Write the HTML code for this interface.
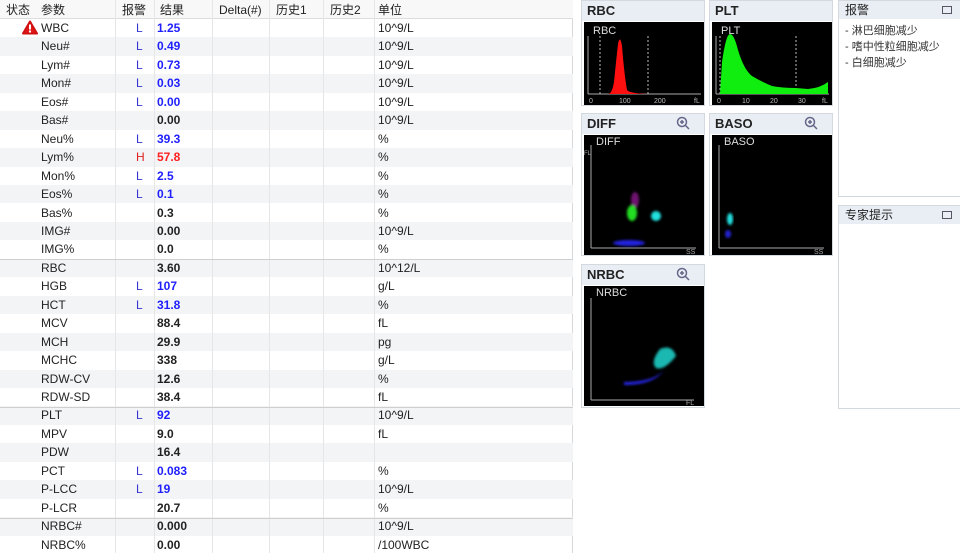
<!DOCTYPE html>
<html><head><meta charset="utf-8"><style>
*{margin:0;padding:0;box-sizing:border-box}
body{width:960px;height:553px;overflow:hidden;background:#fff;font-family:"Liberation Sans","Noto Sans CJK SC",sans-serif;font-size:12px;color:#222;position:relative}
.tbl{position:absolute;left:0;top:0;width:573px;height:553px;border-right:1px solid #d8d8d8}
.hdr{position:absolute;left:0;top:0;width:573px;height:19px;background:#f8f8f8;border-bottom:1px solid #ddd}
.r{position:absolute;left:0;width:573px;height:18.45px}
.r.alt{background:#f3f4f6}
.c{position:absolute;top:0;line-height:18px;white-space:nowrap}
.vl{position:absolute;top:0;width:1px;height:553px;background:#e6e6e6}
.sep{position:absolute;left:0;width:573px;height:1px;background:#cfcfcf}
.b{font-weight:bold}
.blue{color:#1f1fff}.red{color:#ff2020}
.fl{color:#3535d0}.fh{color:#e02020}
.pan{position:absolute;border:1px solid #d4d9e0;background:#fff}
.ph{height:20px;background:#e9eef5;font-weight:bold;font-size:13px;padding-left:5px;line-height:20px;color:#222}
.zi{position:absolute;right:14px;top:2px}
.ch{position:absolute;left:2px;top:21px;background:#000}
.rp{position:absolute;border:1px solid #d4d9e0;background:#fff}
.rph{height:18px;background:#e9eef5;font-size:12px;padding-left:6px;line-height:18px}
.bx{position:absolute;right:9px;top:5px;width:10px;height:8px;border:1px solid #556}
</style></head><body>
<div class="tbl">
<div class="hdr"></div>
<div class="c" style="left:6px;top:1px">状态</div>
<div class="c" style="left:41px;top:1px">参数</div>
<div class="c" style="left:122px;top:1px">报警</div>
<div class="c" style="left:160px;top:1px">结果</div>
<div class="c" style="left:219px;top:1px">Delta(#)</div>
<div class="c" style="left:276px;top:1px">历史1</div>
<div class="c" style="left:330px;top:1px">历史2</div>
<div class="c" style="left:378px;top:1px">单位</div>
<div id="rows"></div>
<div class="vl" style="left:115px"></div>
<div class="vl" style="left:154px"></div>
<div class="vl" style="left:212px"></div>
<div class="vl" style="left:269px"></div>
<div class="vl" style="left:323px"></div>
<div class="vl" style="left:374px"></div>
<div class="sep" style="top:259px"></div>
<div class="sep" style="top:407px"></div>
<div class="sep" style="top:518px"></div>
<svg style="position:absolute;left:22px;top:20px" width="16" height="15" viewBox="0 0 16 15"><path d="M8 1.5 L15 13.5 L1 13.5 Z" fill="#e01818" stroke="#d01010" stroke-linejoin="round" stroke-width="2"/><rect x="7" y="4.5" width="2" height="5" fill="#fff"/><rect x="7" y="10.5" width="2" height="2" fill="#fff"/></svg>
</div>

<script>
var d=[["WBC","L","1.25","10^9/L"],["Neu#","L","0.49","10^9/L"],["Lym#","L","0.73","10^9/L"],["Mon#","L","0.03","10^9/L"],["Eos#","L","0.00","10^9/L"],["Bas#","","0.00","10^9/L"],["Neu%","L","39.3","%"],["Lym%","H","57.8","%"],["Mon%","L","2.5","%"],["Eos%","L","0.1","%"],["Bas%","","0.3","%"],["IMG#","","0.00","10^9/L"],["IMG%","","0.0","%"],["RBC","","3.60","10^12/L"],["HGB","L","107","g/L"],["HCT","L","31.8","%"],["MCV","","88.4","fL"],["MCH","","29.9","pg"],["MCHC","","338","g/L"],["RDW-CV","","12.6","%"],["RDW-SD","","38.4","fL"],["PLT","L","92","10^9/L"],["MPV","","9.0","fL"],["PDW","","16.4",""],["PCT","L","0.083","%"],["P-LCC","L","19","10^9/L"],["P-LCR","","20.7","%"],["NRBC#","","0.000","10^9/L"],["NRBC%","","0.00","/100WBC"]];
var h="";
d.forEach(function(r,i){var t=19+i*18.45;var fc=r[1]=="L"?"fl":"fh";var rc=r[1]=="L"?"blue":(r[1]=="H"?"red":"");
h+='<div class="r'+(i%2?' alt':'')+'" style="top:'+t+'px"><div class="c" style="left:41px">'+r[0]+'</div><div class="c '+fc+'" style="left:136px">'+r[1]+'</div><div class="c b '+rc+'" style="left:157px">'+r[2]+'</div><div class="c" style="left:378px">'+r[3]+'</div></div>';});
document.getElementById("rows").innerHTML=h;
</script>

<svg width="0" height="0" style="position:absolute"><filter id="bl"><feGaussianBlur stdDeviation="1.2"/></filter></svg>
<!-- RBC -->
<div class="pan" style="left:581px;top:0;width:124px;height:106px"><div class="ph">RBC</div>
<svg class="ch" width="120" height="83" viewBox="0 0 120 83"><text x="9" y="12" fill="#ddd" font-size="11" font-family="Liberation Sans">RBC</text>
<line x1="4" y1="14" x2="4" y2="72" stroke="#aaa"/><line x1="4" y1="72" x2="117" y2="72" stroke="#aaa"/>
<line x1="16" y1="14" x2="16" y2="72" stroke="#bbb" stroke-dasharray="2,2"/><line x1="64" y1="14" x2="64" y2="72" stroke="#bbb" stroke-dasharray="2,2"/>
<path d="M24 72 Q28 72 30 60 Q32 40 34 22 Q36 12 38 24 Q40 50 43 68 Q46 72 70 72 Z" fill="#ff1010"/>
<text x="5" y="81" fill="#bbb" font-size="7">0</text><text x="35" y="81" fill="#bbb" font-size="7">100</text><text x="70" y="81" fill="#bbb" font-size="7">200</text><text x="110" y="81" fill="#bbb" font-size="7">fL</text></svg></div>
<!-- PLT -->
<div class="pan" style="left:709px;top:0;width:124px;height:106px"><div class="ph">PLT</div>
<svg class="ch" width="120" height="83" viewBox="0 0 120 83"><text x="9" y="12" fill="#ddd" font-size="11" font-family="Liberation Sans">PLT</text>
<line x1="4" y1="14" x2="4" y2="72" stroke="#aaa"/><line x1="4" y1="72" x2="117" y2="72" stroke="#aaa"/>
<line x1="8" y1="14" x2="8" y2="72" stroke="#bbb" stroke-dasharray="2,2"/><line x1="84" y1="14" x2="84" y2="72" stroke="#bbb" stroke-dasharray="2,2"/>
<path d="M8 72 L10 40 Q14 12 18 12 Q22 12 26 28 Q32 48 40 54 Q50 60 60 64 Q70 66 84 66 L96 67 Q108 66 116 60 L116 72 Z" fill="#10ee10"/>
<text x="5" y="81" fill="#bbb" font-size="7">0</text><text x="30" y="81" fill="#bbb" font-size="7">10</text><text x="58" y="81" fill="#bbb" font-size="7">20</text><text x="86" y="81" fill="#bbb" font-size="7">30</text><text x="110" y="81" fill="#bbb" font-size="7">fL</text></svg></div>
<!-- DIFF -->
<div class="pan" style="left:581px;top:113px;width:124px;height:143px"><div class="ph">DIFF<svg class="zi" width="14" height="14" viewBox="0 0 14 14"><circle cx="6" cy="6" r="4.5" fill="none" stroke="#668" stroke-width="1.5"/><path d="M9.5 9.5 L13 13 M4 6 H8 M6 4 V8" stroke="#668" stroke-width="1.5"/></svg></div>
<svg class="ch" width="120" height="120" viewBox="0 0 120 120"><text x="12" y="10" fill="#ddd" font-size="11">DIFF</text>
<line x1="7" y1="10" x2="7" y2="113" stroke="#aaa"/><line x1="7" y1="113" x2="112" y2="113" stroke="#aaa"/>
<text x="0" y="20" fill="#aaa" font-size="6">FL</text><text x="102" y="119" fill="#aaa" font-size="7">SS</text>
<g filter="url(#bl)"><ellipse cx="51" cy="65" rx="4" ry="8" fill="#a020a0" opacity=".7"/>
<ellipse cx="48" cy="78" rx="5" ry="8" fill="#20dd20"/>
<ellipse cx="72" cy="81" rx="5" ry="5" fill="#20e0e0"/>
<ellipse cx="45" cy="108" rx="16" ry="3" fill="#2020e0"/></g></svg></div>
<!-- BASO -->
<div class="pan" style="left:709px;top:113px;width:124px;height:143px"><div class="ph">BASO<svg class="zi" width="14" height="14" viewBox="0 0 14 14"><circle cx="6" cy="6" r="4.5" fill="none" stroke="#668" stroke-width="1.5"/><path d="M9.5 9.5 L13 13 M4 6 H8 M6 4 V8" stroke="#668" stroke-width="1.5"/></svg></div>
<svg class="ch" width="120" height="120" viewBox="0 0 120 120"><text x="12" y="10" fill="#ddd" font-size="11">BASO</text>
<line x1="7" y1="10" x2="7" y2="113" stroke="#aaa"/><line x1="7" y1="113" x2="112" y2="113" stroke="#aaa"/>
<text x="102" y="119" fill="#aaa" font-size="7">SS</text>
<g filter="url(#bl)"><ellipse cx="18" cy="84" rx="3" ry="6" fill="#20e0e0"/><ellipse cx="16" cy="99" rx="3" ry="4" fill="#2020d0"/></g></svg></div>
<!-- NRBC -->
<div class="pan" style="left:581px;top:264px;width:124px;height:144px"><div class="ph">NRBC<svg class="zi" width="14" height="14" viewBox="0 0 14 14"><circle cx="6" cy="6" r="4.5" fill="none" stroke="#668" stroke-width="1.5"/><path d="M9.5 9.5 L13 13 M4 6 H8 M6 4 V8" stroke="#668" stroke-width="1.5"/></svg></div>
<svg class="ch" width="120" height="120" viewBox="0 0 120 120"><text x="12" y="10" fill="#ddd" font-size="11">NRBC</text>
<line x1="7" y1="12" x2="7" y2="114" stroke="#aaa"/><line x1="7" y1="114" x2="110" y2="114" stroke="#aaa"/>
<text x="102" y="119" fill="#aaa" font-size="7">FL</text>
<g filter="url(#bl)"><path d="M76 63 Q88 58 92 70 Q80 85 72 82 Q66 76 76 63 Z" fill="#20d8d0" opacity=".85"/>
<path d="M40 96 Q70 96 80 84 Q70 99 40 99 Z" fill="#2828f0"/></g></svg></div>
<!-- right panels -->
<div class="rp" style="left:838px;top:0;width:124px;height:197px"><div class="rph">报警<span class="bx"></span></div>
<div style="padding:4px 0 0 6px;font-size:11px;line-height:16px;color:#333">- 淋巴细胞减少<br>- 嗜中性粒细胞减少<br>- 白细胞减少</div></div>
<div class="rp" style="left:838px;top:205px;width:124px;height:204px"><div class="rph">专家提示<span class="bx"></span></div></div>
</body></html>
